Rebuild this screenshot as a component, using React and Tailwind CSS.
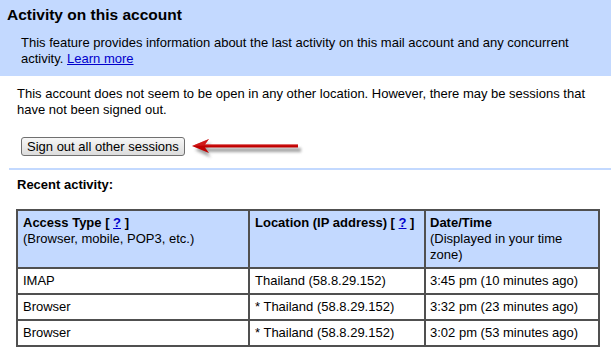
import React from "react";

function Arrow() {
  return (
    <svg width="112" height="26" viewBox="0 0 112 26" className="block">
      <defs>
        <filter id="sh" x="-20%" y="-50%" width="140%" height="200%">
          <feGaussianBlur stdDeviation="1.6" />
        </filter>
      </defs>
      <g filter="url(#sh)" fill="#8a8a8a" opacity="0.8">
        <polygon points="3,13 19,5.5 15,11 109,11 109,15 15,15 19,20.5" />
      </g>
      <polygon points="0,9 17,2 13,7.5 106,7.5 106,10.5 13,10.5 17,16" fill="#c00000" />
      <polygon points="0,9 17,2 13,7.5 106,7.5 106,8.5 13,8.5" fill="#e03030" opacity="0.5" />
    </svg>
  );
}

function Q() {
  return (
    <>
      [ <a href="#" className="text-[#0000cc] underline">?</a> ]
    </>
  );
}

export default function App() {
  const rows = [
    ["IMAP", "Thailand (58.8.29.152)", "3:45 pm (10 minutes ago)"],
    ["Browser", "* Thailand (58.8.29.152)", "3:32 pm (23 minutes ago)"],
    ["Browser", "* Thailand (58.8.29.152)", "3:02 pm (53 minutes ago)"],
  ];
  return (
    <div className="w-[611px] h-[347px] overflow-hidden bg-white font-['Liberation_Sans',Arial,sans-serif] text-[13px] leading-[16px] text-black">
      <div className="bg-[#c3d9ff] h-[76px] pt-[6px]">
        <h1 className="pl-[7px] text-[15.5px] leading-[18px] font-bold">Activity on this account</h1>
        <p className="pl-[21px] pr-[30px] mt-[11px]">
          This feature provides information about the last activity on this mail account and any concurrent activity.{" "}
          <a href="#" className="text-[#0000cc] underline">Learn more</a>
        </p>
      </div>
      <p className="pl-[17px] pr-[12px] mt-[10px]">
        This account does not seem to be open in any other location. However, there may be sessions that have not been signed out.
      </p>
      <div className="flex items-start h-[19px] pl-[21px] mt-[19px]">
        <button className="h-[19px] px-[5px] border border-[#707070] rounded-[3px] bg-gradient-to-b from-[#f7f7f7] to-[#dcdcdc] text-[13px] leading-[16px] text-black">
          Sign out all other sessions
        </button>
        <div className="ml-[7px] h-[19px]">
          <Arrow />
        </div>
      </div>
      <div className="ml-[9px] mt-[12px] h-[2px] bg-[#c3d9ff]" />
      <div className="pl-[17px] mt-[7px] font-bold">Recent activity:</div>
      <div className="ml-[16px] mt-[16px] w-[584px] grid grid-cols-[230px_174px_172px] gap-[2px] p-[2px] bg-[#505050]">
        <div className="bg-[#c3d9ff] h-[56px] px-[5px] pt-[4px]">
          <div className="font-bold">Access Type <Q /></div>
          <div>(Browser, mobile, POP3, etc.)</div>
        </div>
        <div className="bg-[#c3d9ff] h-[56px] px-[5px] pt-[4px]">
          <div className="font-bold">Location (IP address) <Q /></div>
        </div>
        <div className="bg-[#c3d9ff] h-[56px] px-[4px] pt-[4px]">
          <div className="font-bold">Date/Time</div>
          <div>(Displayed in your time zone)</div>
        </div>
        {rows.map((r, i) => (
          <React.Fragment key={i}>
            <div className="bg-white h-[24px] px-[5px] flex items-center">{r[0]}</div>
            <div className="bg-white h-[24px] px-[5px] flex items-center">{r[1]}</div>
            <div className="bg-white h-[24px] px-[4px] flex items-center">{r[2]}</div>
          </React.Fragment>
        ))}
      </div>
    </div>
  );
}
